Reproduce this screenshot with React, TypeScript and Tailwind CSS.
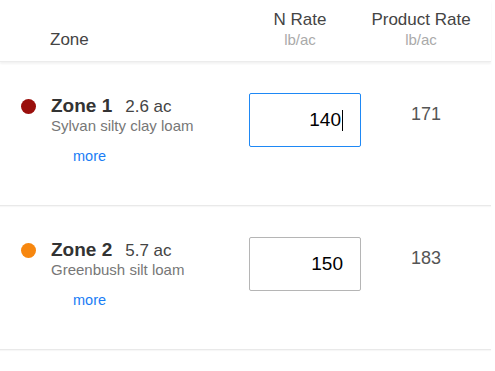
const zones = [
  { name: 'Zone 1', acres: '2.6 ac', soil: 'Sylvan silty clay loam', color: 'bg-[#9a0f0c]', rate: '140', product: '171', focused: true },
  { name: 'Zone 2', acres: '5.7 ac', soil: 'Greenbush silt loam', color: 'bg-[#f7870f]', rate: '150', product: '183', focused: false },
];

const ZoneRow = ({ zone }: { zone: (typeof zones)[number] }) => (
  <div className="flex h-[144px] pt-[31px] border-b border-[#e9e9e9] shadow-[0_1px_1px_rgba(0,0,0,0.03)]">
    <div className="w-[249px] flex items-start pt-[2px]">
      <span className={`ml-[21px] mt-[4px] size-[15px] rounded-full shrink-0 ${zone.color}`} />
      <div className="ml-[15px] flex flex-col">
        <div className="flex items-baseline gap-[13px] leading-[21px]">
          <span className="text-[19px] font-bold text-[#333]">{zone.name}</span>
          <span className="text-[17px] text-[#444]">{zone.acres}</span>
        </div>
        <div className="text-[15px] leading-[18px] text-[#777]">{zone.soil}</div>
        <a className="mt-[12px] ml-[22px] text-[14.5px] leading-[18px] text-[#1a7df5]">more</a>
      </div>
    </div>
    <div className="w-[112px]">
      <div
        className={`h-[54px] flex items-center justify-end pr-[17px] rounded-[2px] border bg-white text-[19px] text-black ${
          zone.focused ? 'border-[#1e88f5]' : 'border-[#b5b5b5]'
        }`}
      >
        {zone.rate}
        {zone.focused && <span className="ml-[1px] w-px h-[21px] bg-black" />}
      </div>
    </div>
    <div className="w-[130px] text-center text-[18px] leading-[20px] text-[#555] pt-[11px]">{zone.product}</div>
  </div>
);

export default function App() {
  return (
    <div className="w-[495px] h-[371px] bg-white overflow-hidden" style={{ fontFamily: '"Liberation Sans", Arial, sans-serif' }}>
      <div className="w-[491px]">
        <div className="flex items-end h-[62px] pb-[11px] border-b border-[#ececec] shadow-[0_2px_2px_rgba(0,0,0,0.05)]">
          <div className="w-[249px] pl-[50px] text-[17px] leading-[20px] text-[#444]">Zone</div>
          <div className="w-[112px] pr-[10px] text-center">
            <div className="text-[17px] leading-[20px] text-[#444]">N Rate</div>
            <div className="text-[15px] leading-[20px] text-[#aaa]">lb/ac</div>
          </div>
          <div className="w-[130px] pr-[10px] text-center">
            <div className="text-[17px] leading-[20px] text-[#444]">Product Rate</div>
            <div className="text-[15px] leading-[20px] text-[#aaa]">lb/ac</div>
          </div>
        </div>
        {zones.map((z) => (
          <ZoneRow key={z.name} zone={z} />
        ))}
      </div>
    </div>
  );
}
